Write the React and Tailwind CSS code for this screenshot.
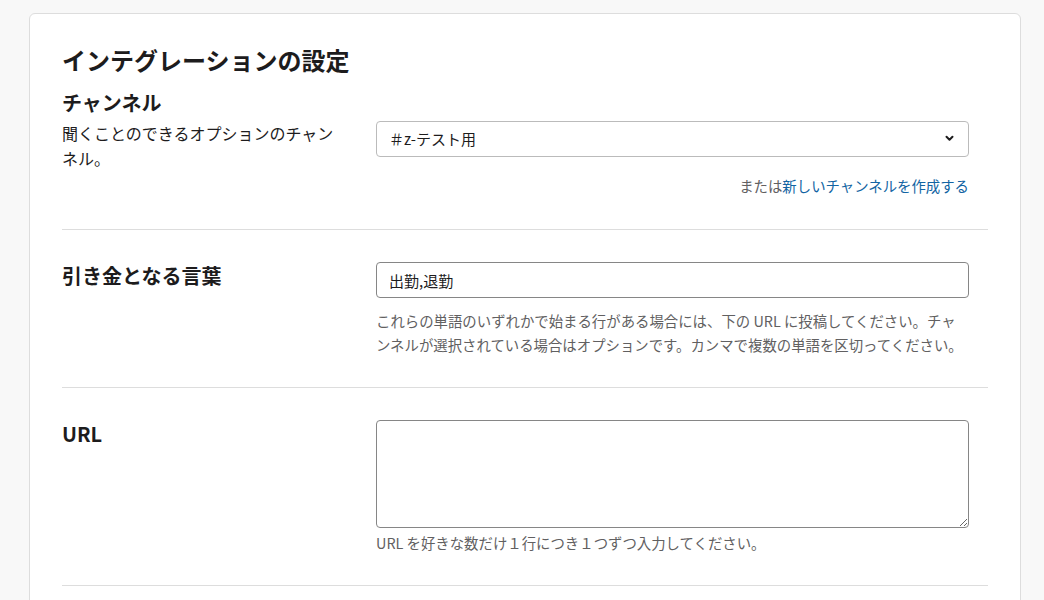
import { useState } from 'react'

const font = { fontFamily: '"Noto Sans CJK JP", "Noto Sans", sans-serif' }

const Divider = () => <div className="h-px bg-[#dddddd]" />

export default function App() {
  const [channel, setChannel] = useState('z-test')
  const [words, setWords] = useState('出勤,退勤')
  const [urls, setUrls] = useState('')

  return (
    <div className="min-h-[600px] bg-[#f8f8f8] pt-[13px] pl-[29px] pr-[23px] text-[#1d1c1d]" style={font}>
      <div className="bg-white border border-[#dddddd] rounded-md px-8 pt-[30px] pb-10">
        <h1 className="text-[24px] leading-8 font-bold">インテグレーションの設定</h1>

        <section className="pb-[33px]">
          <h2 className="mt-[13px] text-[20px] leading-7 font-bold">チャンネル</h2>
          <div className="grid grid-cols-[314px_593px] mt-[4px]">
            <p className="text-[16px] leading-[25px] pr-8">
              聞くことのできるオプションのチャンネル。
            </p>
            <div className="flex flex-col">
              <div className="relative">
                <select
                  value={channel}
                  onChange={(e) => setChannel(e.target.value)}
                  className="w-full h-9 appearance-none rounded border border-[#bbbbbb] bg-white pl-[12px] pr-8 text-[15px] text-[#1d1c1d] outline-none"
                  style={font}
                >
                  <option value="z-test">＃z-テスト用</option>
                  <option value="general">＃general</option>
                </select>
                <svg
                  className="absolute right-[15px] top-[14px] pointer-events-none"
                  width="9"
                  height="7"
                  viewBox="0 0 9 7"
                  fill="none"
                >
                  <path d="M1.5 1.8 L4.5 4.8 L7.5 1.8" stroke="#1d1c1d" strokeWidth="2" strokeLinecap="round" strokeLinejoin="round" />
                </svg>
              </div>
              <p className="mt-[19px] text-right text-[14.4px] leading-5 text-[#616061]">
                または<a href="#" className="text-[#1264a3]">新しいチャンネルを作成する</a>
              </p>
            </div>
          </div>
        </section>

        <Divider />

        <section className="grid grid-cols-[314px_593px] pt-[32px] pb-[30px]">
          <h2 className="text-[20px] leading-7 font-bold">引き金となる言葉</h2>
          <div>
            <input
              type="text"
              value={words}
              onChange={(e) => setWords(e.target.value)}
              className="w-full h-9 rounded border border-[#868686] px-3 text-[15px] text-[#1d1c1d] outline-none"
              style={font}
            />
            <p className="mt-[11px] text-[14.4px] leading-6 text-[#616061]">
              これらの単語のいずれかで始まる行がある場合には、下の URL に投稿してください。チャンネルが選択されている場合はオプションです。カンマで複数の単語を区切ってください。
            </p>
          </div>
        </section>

        <Divider />

        <section className="grid grid-cols-[314px_593px] pt-[32px] pb-[32px]">
          <h2 className="text-[20px] leading-7 font-bold">URL</h2>
          <div>
            <textarea
              value={urls}
              onChange={(e) => setUrls(e.target.value)}
              className="block w-full h-[108px] rounded border border-[#868686] px-3 py-2 text-[15px] outline-none"
              style={font}
            />
            <p className="mt-[5px] text-[14.4px] leading-5 text-[#616061]">
              URL を好きな数だけ１行につき１つずつ入力してください。
            </p>
          </div>
        </section>

        <Divider />
      </div>
    </div>
  )
}
